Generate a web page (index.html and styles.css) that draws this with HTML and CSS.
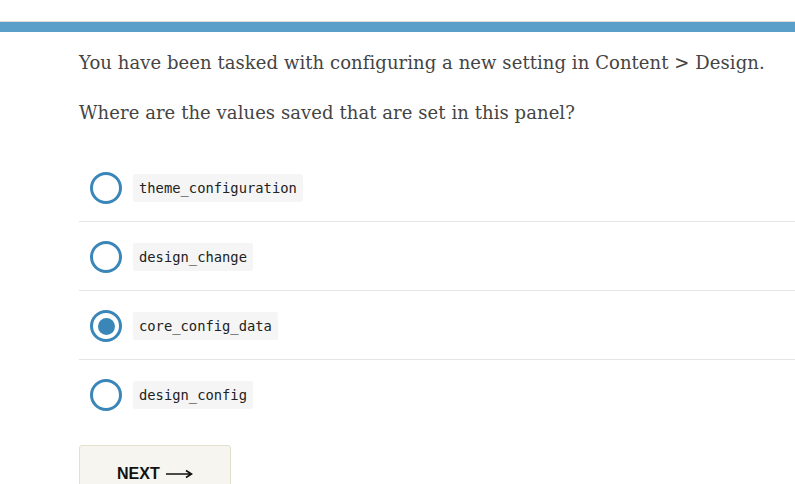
FILE: index.html
```html
<!DOCTYPE html>
<html>
<head>
<meta charset="utf-8">
<link rel="stylesheet" href="styles.css">
</head>
<body>
<div class="topbar"></div>
<div class="progress"></div>
<main class="quiz">
  <p class="question">You have been tasked with configuring a new setting in Content &gt; Design.</p>
  <p class="question">Where are the values saved that are set in this panel?</p>
  <ul class="options">
    <li class="option"><span class="radio"></span><code class="chip">theme_configuration</code></li>
    <li class="option"><span class="radio"></span><code class="chip">design_change</code></li>
    <li class="option"><span class="radio checked"></span><code class="chip">core_config_data</code></li>
    <li class="option"><span class="radio"></span><code class="chip">design_config</code></li>
  </ul>
  <button class="next">NEXT <svg class="arrow" width="27" height="10" viewBox="0 0 27 10"><path d="M0 5H25M20 1.5L25.5 5L20 8.5" fill="none" stroke="#111" stroke-width="1.6"/></svg></button>
</main>
</body>
</html>
```

FILE: styles.css
```css
html, body {
  margin: 0;
  padding: 0;
  background: #fff;
  overflow: hidden;
}
body {
  width: 795px;
  height: 484px;
}
.topbar {
  height: 21px;
  border-bottom: 1px solid #dcdcdc;
}
.progress {
  height: 10px;
  background: #5a9fca;
}
.quiz {
  padding-left: 79px;
}
.question {
  margin: 0;
  font-family: "DejaVu Serif", Georgia, serif;
  font-size: 18px;
  letter-spacing: 0.07px;
  line-height: 50px;
  color: #444;
}
.question:first-child {
  margin-top: 6px;
}
.options {
  list-style: none;
  margin: 15px 0 0 0;
  padding: 0;
}
.option {
  display: flex;
  align-items: center;
  gap: 11px;
  height: 66px;
  padding: 2px 0 0 11px;
  border-bottom: 1px solid #e6e6e6;
}
.option:last-child {
  border-bottom: none;
}
.radio {
  box-sizing: border-box;
  width: 32px;
  height: 32px;
  border: 3px solid #3b86b8;
  border-radius: 50%;
  display: flex;
  align-items: center;
  justify-content: center;
}
.radio.checked::after {
  content: "";
  width: 17px;
  height: 17px;
  border-radius: 50%;
  background: #3b86b8;
}
.chip {
  background: #f5f5f5;
  font-family: "DejaVu Sans Mono", monospace;
  font-size: 13.8px;
  line-height: 28px;
  padding: 0 6px;
  border-radius: 2px;
  color: #222;
}
.next {
  margin-top: 17px;
  width: 152px;
  height: 58px;
  padding: 0 0 0 37px;
  text-align: left;
  background: #f6f5ef;
  border: 1px solid #e2e0cf;
  border-radius: 3px;
  font-family: "Liberation Sans", Arial, sans-serif;
  font-weight: bold;
  font-size: 16px;
  color: #111;
  display: flex;
  align-items: center;
  gap: 6px;
}
.arrow {
  display: block;
}
```
